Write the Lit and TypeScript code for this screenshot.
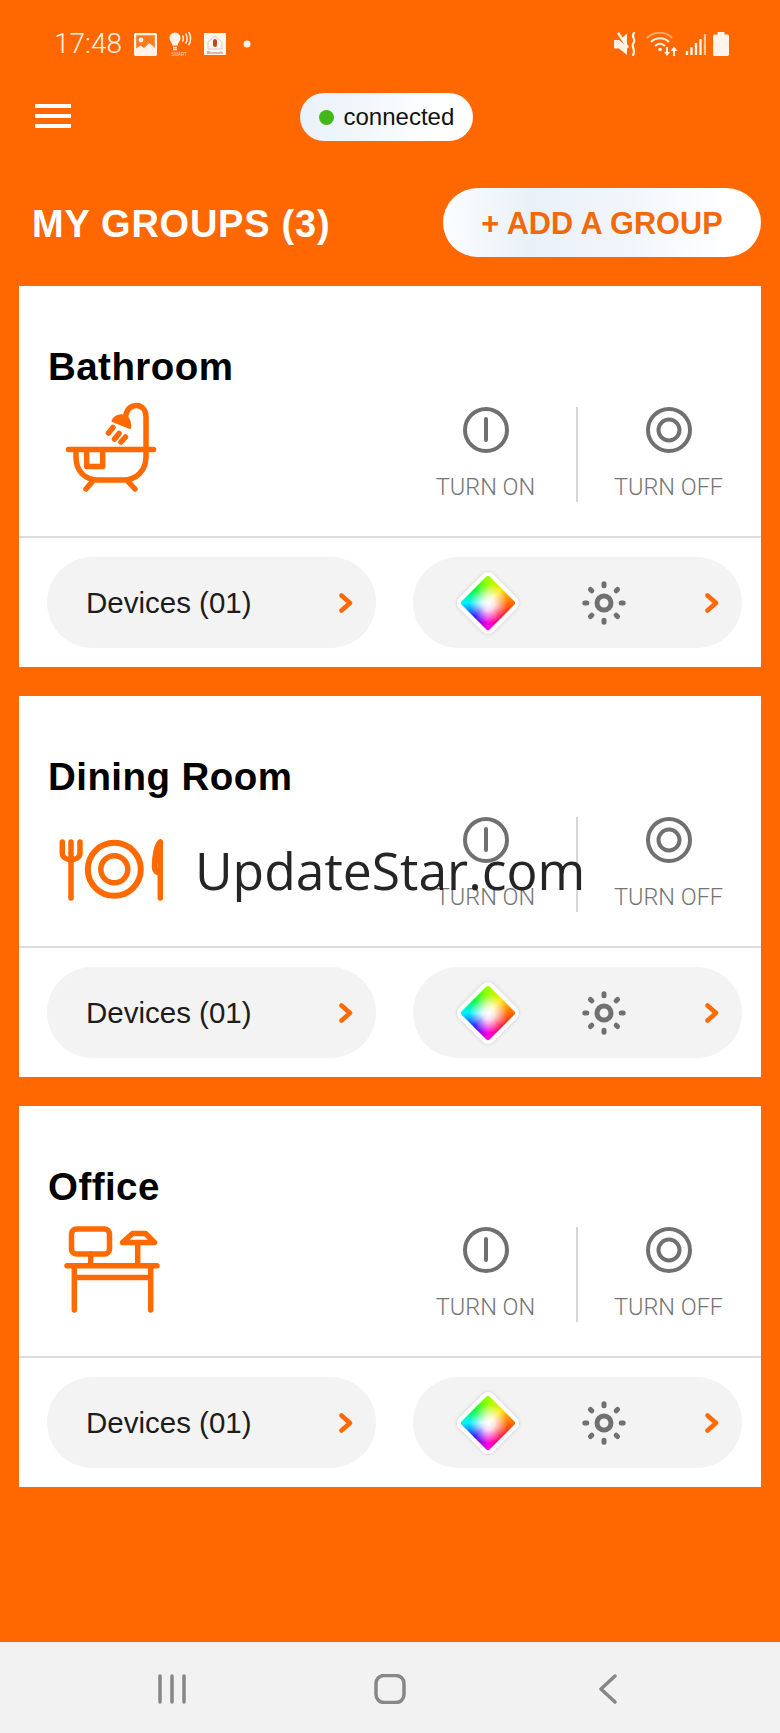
import { LitElement, html, css, svg } from "lit";
import { customElement } from "lit/decorators.js";

const bath = svg`
  <path d="M20.5 52.5H105.5" />
  <path d="M28 53V60C28 75 38 83 50 83H75C89 83 98 73 98 60V20C98 5 80 5 78 18" />
  <path d="M38.7 53V69.5H54.7V53" />
  <path d="M44 85L38 92M80.5 85L87 92M60.5 36L65 30.5M66.5 42L71 36.5M73 45L77.5 40" />
  <path class="fill" d="M64.500 24C67 18 76 16.500 80 21C82 24 82.500 27 82 31Z" />`;

const dining = svg`
  <path d="M14.300 35V46C14.300 55 32 55 32 46V35M23 35V91" />
  <circle class="bold" cx="66.300" cy="62.300" r="26.500" />
  <circle cx="66.300" cy="62.300" r="13.500" />
  <path d="M112.300 35C108.500 38 106.500 50 106.500 60C106.500 64 109 66 112.300 66M112.300 35V91" />`;

const office = svg`
  <rect x="23.500" y="12" width="38" height="25" rx="5" />
  <path d="M42.700 37V48M19 48.700H109M26.300 49V93M102.700 49V93M26.300 60.500H102.700M89.700 27V48" />
  <path d="M84.500 16.500H97.500L106.500 25.500H74.500Z" />`;

const turnOn = html`<svg class="act-icon" viewBox="0 0 46 46"><circle cx="23" cy="23" r="21" /><path d="M23 12V33" /></svg>`;
const turnOff = html`<svg class="act-icon" viewBox="0 0 46 46"><circle cx="23" cy="23" r="21" /><circle cx="23" cy="23" r="10.500" /></svg>`;
const chevron = html`<svg class="chev" viewBox="0 0 14 20"><path d="M2.500 2.500L11 10L2.500 17.500" /></svg>`;
const rays = [0, 45, 90, 135, 180, 225, 270, 315];
const sun = html`<svg class="sun" viewBox="0 0 46 46">
  <circle cx="23" cy="23" r="7" />
  ${rays.map((a) => svg`<path transform="rotate(${a} 23 23)" d="M23 3.800V5.800" />`)}
</svg>`;

@customElement("group-card")
class GroupCard extends LitElement {
  static properties = { name: {}, kind: {} };
  name = "";
  kind = "bath";

  static styles = css`
    :host { display: block; background: #fff; height: 381px; font-family: "Liberation Sans", Arial, sans-serif; }
    .top { border-bottom: 2px solid #dcdcdc; box-sizing: border-box; height: 252px; padding: 59px 0 0 29px; }
    h2 { margin: 0 0 18px; font-size: 38.500px; line-height: 44px; font-weight: 700; color: #000; letter-spacing: 0.45px; }
    .row { display: flex; justify-content: space-between; align-items: flex-start; padding-right: 2px; }
    .room { width: 120px; height: 110px; margin: -10px 0 0; flex: none; }
    .room * { fill: none; stroke: #ff6a00; stroke-width: 5.500; stroke-linecap: round; stroke-linejoin: round; }
    .room .fill { fill: #ff6a00; stroke-width: 2; }
    .room .bold { stroke-width: 6; }
    .actions { display: flex; }
    .act { width: 181px; height: 95px; display: flex; flex-direction: column; align-items: center; box-sizing: border-box; }
    .act + .act { border-left: 2px solid #d6d6d6; width: 183px; }
    .act-icon { width: 46px; height: 46px; flex: none; }
    .act-icon * { fill: none; stroke: #707070; stroke-width: 4; stroke-linecap: round; }
    .act span { margin-top: 21px; font-family: Roboto, sans-serif; font-size: 23.500px; line-height: 26px; color: #747474; font-weight: 300; }
    .bottom { display: flex; justify-content: space-between; padding: 19px 19px 0 28px; }
    .pill { height: 91px; width: 329px; border-radius: 46px; background: #f3f3f3; display: flex; align-items: center; box-sizing: border-box; }
    .devices { padding: 0 23px 0 39px; justify-content: space-between; font-size: 29.500px; color: #1c1c1c; }
    .lights { padding-left: 44px; }
    .diamond-box { width: 62px; height: 62px; display: flex; align-items: center; justify-content: center; flex: none; }
    .diamond {
      width: 40px; height: 40px; flex: none; border: 4px solid #fff; border-radius: 7px; transform: rotate(45deg);
      box-shadow: 0 0 4px rgba(0, 0, 0, 0.18);
      background:
        radial-gradient(circle at 52% 50%, #fff 0, rgba(255, 255, 255, 0.85) 22%, rgba(255, 255, 255, 0) 68%),
        conic-gradient(from -45deg, #9dff00, #ffe600 45deg, #ff6a00 90deg, #ff0030 135deg, #ff00e0 180deg, #2010ff 225deg, #00f0ff 270deg, #00ff30 315deg, #9dff00 360deg);
    }
    .sun { width: 46px; height: 46px; margin-left: 62px; flex: none; }
    .sun * { fill: none; stroke: #707070; stroke-width: 5; stroke-linecap: round; }
    .chev { width: 14px; height: 20px; flex: none; }
    .chev path { fill: none; stroke: #ff6a00; stroke-width: 4.500; stroke-linecap: round; stroke-linejoin: round; }
    .lights .chev { margin-left: 78px; }
  `;

  render() {
    const art = this.kind === "bath" ? bath : this.kind === "dining" ? dining : office;
    return html`
      <div class="top">
        <h2>${this.name}</h2>
        <div class="row">
          <svg class="room" viewBox="0 0 120 110">${art}</svg>
          <div class="actions">
            <div class="act">${turnOn}<span>TURN ON</span></div>
            <div class="act">${turnOff}<span>TURN OFF</span></div>
          </div>
        </div>
      </div>
      <div class="bottom">
        <div class="pill devices"><span>Devices (01)</span>${chevron}</div>
        <div class="pill lights">
          <div class="diamond-box"><div class="diamond"></div></div>
          ${sun}${chevron}
        </div>
      </div>
    `;
  }
}

@customElement("app-root")
class AppRoot extends LitElement {
  static styles = css`
    :host { display: flex; flex-direction: column; position: relative; width: 780px; height: 1733px; background: #ff6700; font-family: "Liberation Sans", Arial, sans-serif; overflow: hidden; }
    .status { height: 88px; display: flex; align-items: center; justify-content: space-between; padding: 0 51px 0 54px; box-sizing: border-box; flex: none; }
    .status-l, .status-r { display: flex; align-items: center; }
    .time { font-family: Roboto, sans-serif; font-weight: 300; font-size: 28px; line-height: 32px; color: #fff3e8; width: 80px; }
    .si { display: block; flex: none; }
    .si text { font-family: "Liberation Sans", sans-serif; }
    .ml8 { margin-left: 8px; } .ml7 { margin-left: 7px; } .ml11 { margin-left: 11px; } .ml12 { margin-left: 12px; } .ml17 { margin-left: 17px; }
    .header { height: 64px; position: relative; display: flex; align-items: center; justify-content: center; flex: none; margin-top: -3px; }
    .burger { position: absolute; left: 35px; top: 19px; width: 36px; height: 24px; display: flex; flex-direction: column; justify-content: space-between; }
    .burger i { display: block; height: 4px; background: #fff; }
    .conn { width: 173px; height: 48px; margin-left: -8px; border-radius: 24px; display: flex; align-items: center; box-sizing: border-box; padding-left: 19px; background: linear-gradient(90deg, #e9f1f9, #ffffff 85%); font-size: 24px; color: #111; }
    .conn i { width: 15px; height: 15px; border-radius: 50%; background: #43b61a; margin-right: 10px; }
    .title-row { height: 69px; margin: 39px 19px 29px 32px; display: flex; align-items: center; justify-content: space-between; flex: none; }
    h1 { margin: 2px 0 0; color: #fff; font-size: 38px; font-weight: 700; line-height: 44px; letter-spacing: 0.75px; }
    .add { width: 318px; height: 69px; border-radius: 35px; background: linear-gradient(90deg, #fbfdff, #e9f1f8 28%, #f2f6fb 60%, #ffffff 88%); color: #f06a0c; font-size: 30.700px; font-weight: 700; text-align: center; line-height: 71px; }
    .cards { display: flex; flex-direction: column; gap: 29px; margin: 0 19px; }
    .nav { margin-top: auto; height: 91px; background: #f2f2f2; display: grid; grid-template-columns: repeat(3, 218px); padding: 32px 0 0 63px; box-sizing: border-box; justify-items: center; align-items: start; flex: none; }
    .nav svg { width: 40px; height: 30px; display: block; }
    .nav svg * { fill: none; stroke: #878787; stroke-width: 3.500; stroke-linecap: round; stroke-linejoin: round; }
    .mark { position: absolute; left: 195px; top: 835px; font-family: "Open Sans", "Noto Sans", sans-serif; font-size: 51.600px; line-height: 70px; color: #252525; font-weight: 400; }
  `;

  render() {
    return html`
      <div class="status">
        <div class="status-l">
          <span class="time">17:48</span>
          <svg class="si" width="23" height="23" viewBox="0 0 23 23">
            <path fill="#fff3e8" d="M0 1.500C0 .7.7 0 1.500 0H21.500C22.300 0 23 .7 23 1.500V21.500C23 22.300 22.300 23 21.500 23H1.500C.7 23 0 22.300 0 21.500Z" />
            <path fill="#ff7a20" d="M2.200 2.200H20.800V15L15.500 10 10 15 6.500 12.500 2.200 15.500Z" />
            <circle cx="7" cy="7" r="2.400" fill="#fff3e8" />
          </svg>
          <svg class="si ml11" width="24" height="24" viewBox="0 0 24 24">
            <path fill="#fff3e8" d="M7 0.500C3.500 0.500 1.500 3.500 1.500 6C1.500 9 4 10.500 4.500 13.500H9.500C10 10.500 12.500 9 12.500 6C12.500 3.500 10.500 0.500 7 0.500Z" />
            <path fill="none" stroke="#fff3e8" stroke-width="1.500" d="M5 15.500H9M5 17.500H9" />
            <path fill="none" stroke="#fff3e8" stroke-width="1.500" d="M14.500 3.500C15.700 5 15.700 8 14.500 9.500M17.500 1.500C19.700 4 19.700 9 17.500 11.500M20.500 0C23.300 3 23.300 10 20.500 13" />
            <text x="11" y="23.500" font-size="4.500" fill="#ffd9bd" text-anchor="middle">SMART</text>
          </svg>
          <svg class="si ml12" width="22" height="22" viewBox="0 0 22 22">
            <rect width="22" height="22" fill="#fff6ee" />
            <path fill="none" stroke="#d8c8c0" stroke-width="1" d="M4 9L11 3L18 9V16H4Z" />
            <rect x="9" y="6" width="4" height="8" rx="2" fill="#c9471f" />
            <text x="11" y="20.500" font-size="3.800" fill="#c9471f" text-anchor="middle">Bluetooth</text>
          </svg>
          <svg class="si ml17" width="8" height="8" viewBox="0 0 8 8"><circle cx="4" cy="4" r="3.500" fill="#fff3e8" /></svg>
        </div>
        <div class="status-r">
          <svg class="si" width="24" height="24" viewBox="0 0 24 24">
            <path fill="#fff3e8" d="M0 8H5L13 14.500V23L5 16.500H0ZM3 1.500L5 0L15 15L13 16.500ZM8 6L13 1.500V12Z" />
            <path fill="none" stroke="#fff3e8" stroke-width="2.200" stroke-linecap="round" d="M20 1C16.500 5 22.500 7 19.500 11C16.500 15 22.500 18 19 23" />
          </svg>
          <svg class="si ml8" width="32" height="24" viewBox="0 0 32 24">
            <path fill="none" stroke="#ffa566" stroke-width="2" d="M1 6C8 -1 20 -1 26 6" />
            <path fill="none" stroke="#fff3e8" stroke-width="2" d="M5 10C10 5 18 5 23 10M9 14C12 11 16 11 19 14" />
            <circle cx="14" cy="17.500" r="1.800" fill="#fff3e8" />
            <path fill="#fff3e8" d="M20 15H22V20H24L21 24L18 20H20ZM27 24H29V19H31.500L28 14.500L24.500 19H27Z" />
          </svg>
          <svg class="si ml7" width="21" height="21" viewBox="0 0 21 21">
            <path fill="none" stroke="#fff3e8" stroke-width="2.400" d="M2 21V17M6.500 21V13M11 21V9M15.500 21V5" />
            <path fill="none" stroke="#ffc9a0" stroke-width="2.400" d="M20 21V0" />
          </svg>
          <svg class="si ml7" width="16" height="24" viewBox="0 0 16 24">
            <path fill="#fff3ea" d="M4.500 0H11.500V2.500H14.500C15.300 2.500 16 3.200 16 4V22.500C16 23.300 15.300 24 14.500 24H1.500C.7 24 0 23.300 0 22.500V4C0 3.200.7 2.500 1.500 2.500H4.500Z" />
          </svg>
        </div>
      </div>
      <div class="header">
        <div class="burger"><i></i><i></i><i></i></div>
        <div class="conn"><i></i>connected</div>
      </div>
      <div class="title-row">
        <h1>MY GROUPS (3)</h1>
        <div class="add">+ ADD A GROUP</div>
      </div>
      <div class="cards">
        <group-card name="Bathroom" kind="bath"></group-card>
        <group-card name="Dining Room" kind="dining"></group-card>
        <group-card name="Office" kind="office"></group-card>
      </div>
      <div class="nav">
        <svg viewBox="0 0 40 30"><path d="M8 2V28M20 2V28M32 2V28" /></svg>
        <svg viewBox="0 0 40 30"><rect x="6" y="1.500" width="28" height="27" rx="8" /></svg>
        <svg viewBox="0 0 40 30"><path d="M27 2L13 15L27 28" /></svg>
      </div>
      <div class="mark">UpdateStar.com</div>
    `;
  }
}
